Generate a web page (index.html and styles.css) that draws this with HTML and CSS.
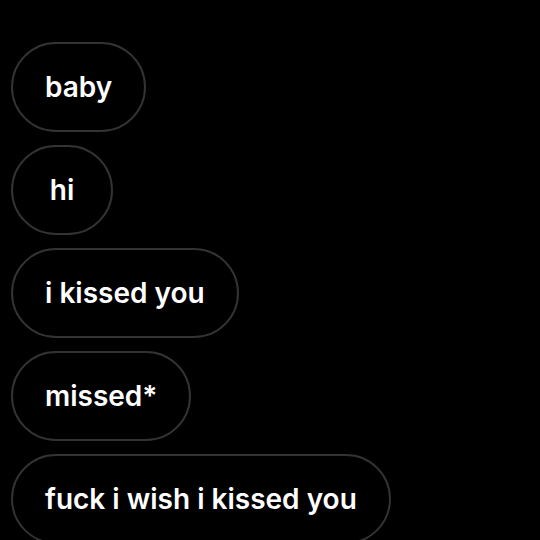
FILE: index.html
```html
<!DOCTYPE html>
<html lang="en">
<head>
  <meta charset="UTF-8" />
  <title>Messages</title>
  <link rel="stylesheet" href="styles.css">
</head>
<body>

  <!-- Message thread -->
  <div class="thread">
    <div class="bubble">baby</div>
    <div class="bubble">hi</div>
    <div class="bubble">i kissed you</div>
    <div class="bubble">missed*</div>
    <div class="bubble">fuck i wish i kissed you</div>
  </div>

</body>
</html>
```

FILE: styles.css
```css
body {
  font-family: Inter, "Noto Sans", sans-serif;
  background: #000;
  color: #fff;
  margin: 0;
  padding: 0;
  height: 540px;
  overflow: hidden;
}

.thread {
  display: flex;
  flex-direction: column;
  align-items: flex-start;
  gap: 13px;
  padding: 42px 0 0 11px;
}

.bubble {
  min-width: 102px;
  box-sizing: border-box;
  height: 90px;
  padding: 0 32px;
  border: 2px solid #333;
  border-radius: 45px;
  font-size: 28px;
  font-weight: 600;
  line-height: 86px;
  text-align: center;
  white-space: nowrap;
}
```
